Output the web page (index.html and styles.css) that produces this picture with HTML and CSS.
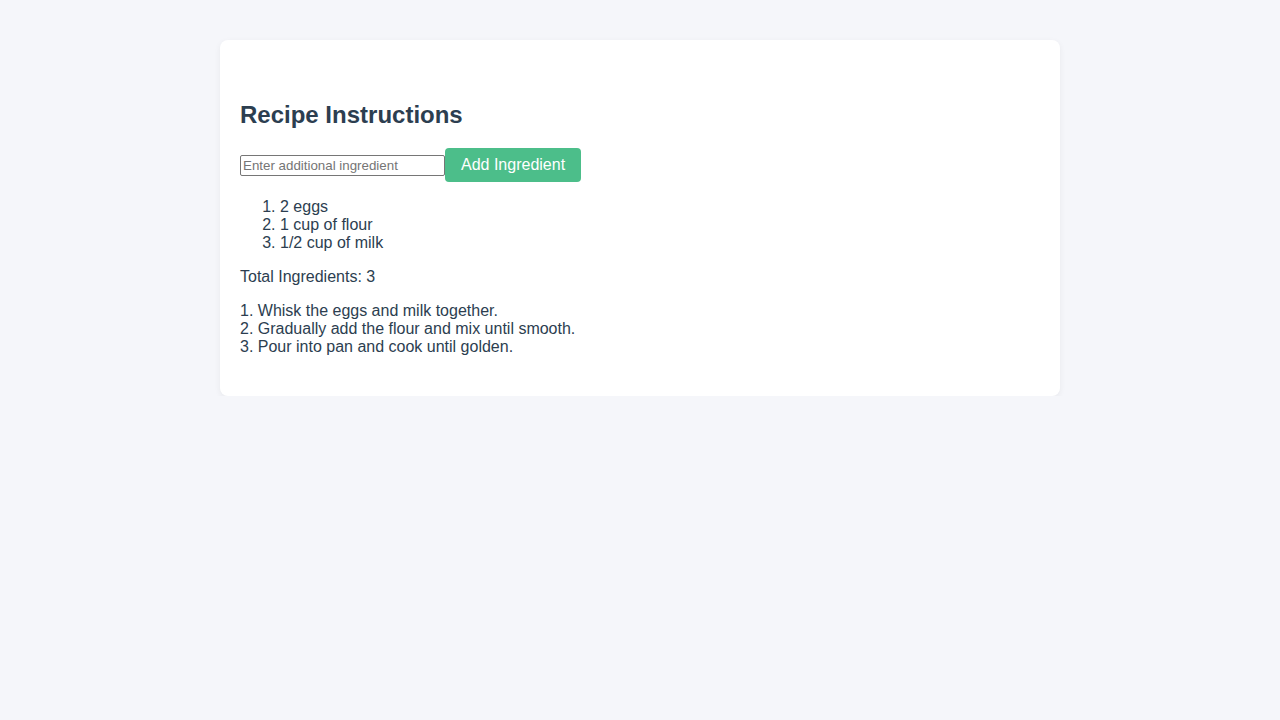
FILE: index.html
```html
<!DOCTYPE html>
<html lang="en">
<head>
<meta charset="utf-8">
<title>Recipe Instructions</title>
<link rel="stylesheet" href="styles.css">
</head>
<body>
<div class="card">
  <h2 class="title">Recipe Instructions</h2>
  <div class="add-row">
    <input class="ing-input" type="text" placeholder="Enter additional ingredient">
    <button class="add-btn">Add Ingredient</button>
  </div>
  <ol class="ingredients">
    <li>2 eggs</li>
    <li>1 cup of flour</li>
    <li>1/2 cup of milk</li>
  </ol>
  <p class="total">Total Ingredients: 3</p>
  <div class="steps">
    <div>1. Whisk the eggs and milk together.</div>
    <div>2. Gradually add the flour and mix until smooth.</div>
    <div>3. Pour into pan and cook until golden.</div>
  </div>
</div>
</body>
</html>
```

FILE: styles.css
```css
html, body {
  margin: 0;
  padding: 0;
}
body {
  background: #f5f6fa;
  font-family: "Liberation Sans", Arial, sans-serif;
  color: #2c3e50;
  font-size: 16px;
  padding-top: 40px;
}
.card {
  width: 800px;
  margin: 0 auto;
  background: #ffffff;
  border-radius: 8px;
  box-shadow: 0 2px 6px rgba(0, 0, 0, 0.06);
  padding: 61px 20px 40px;
}
.title {
  font-size: 24px;
  font-weight: bold;
  margin: 0 0 19px;
}
.add-row {
  display: flex;
  align-items: center;
}
.ing-input {
  width: 205px;
  height: 21px;
  box-sizing: border-box;
  font-family: "Liberation Sans", Arial, sans-serif;
  font-size: 13.33px;
  border: 1px solid #767676;
  border-radius: 2px;
  padding: 1px 2px;
  margin: 0;
  color: #2c3e50;
}
.ing-input::placeholder {
  color: #757575;
}
.add-btn {
  height: 34px;
  padding: 0 16px;
  background: #4cbe8a;
  color: #ffffff;
  border: none;
  border-radius: 4px;
  font-family: "Liberation Sans", Arial, sans-serif;
  font-size: 16px;
  margin: 0;
}
.ingredients {
  margin: 16px 0;
  padding-left: 40px;
}
.total {
  margin: 16px 0;
}
.steps {
  margin: 0;
}
```
